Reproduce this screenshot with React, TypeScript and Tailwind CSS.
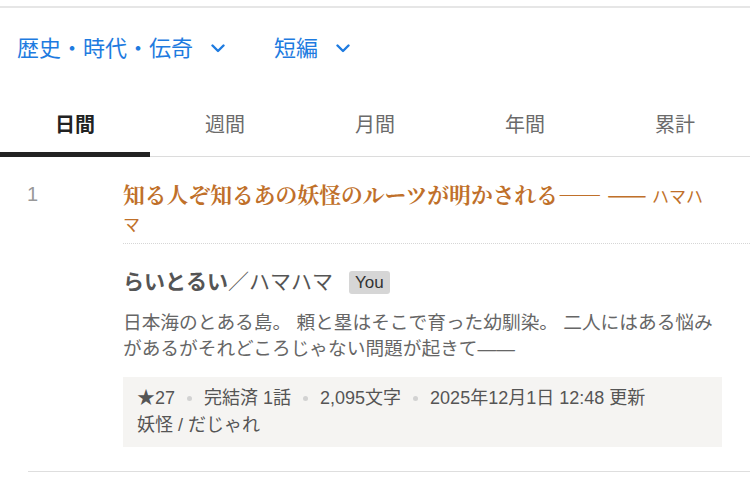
import React from "react";

const sans = { fontFamily: '"Liberation Sans", "Noto Sans CJK JP", sans-serif' };
const serif = { fontFamily: '"Noto Serif CJK JP", "Liberation Serif", "Noto Sans CJK JP", serif' };

function Chevron() {
  return (
    <svg width="14" height="9" viewBox="0 0 14 9" fill="none" className="shrink-0">
      <path d="M1.5 1.5 L7 7 L12.5 1.5" stroke="#1e7be0" strokeWidth="2.4" strokeLinecap="round" strokeLinejoin="round" />
    </svg>
  );
}

function Dot() {
  return <span className="mx-[12px] inline-block w-[5px] h-[5px] rounded-full bg-[#d2d2d2]" />;
}

const tabs = ["日間", "週間", "月間", "年間", "累計"];

export default function App() {
  return (
    <div className="w-[750px] h-[487px] bg-white overflow-hidden" style={sans}>
      <div className="h-[6px]" />
      <div className="h-[2px] bg-[#e6e6e6]" />
      <div className="h-[80px] flex items-center pl-[17px] text-[#1e7be0] text-[22px]">
        <div className="flex items-center gap-[18px]">
          <span>歴史・時代・伝奇</span>
          <Chevron />
        </div>
        <div className="flex items-center gap-[18px] ml-[49px]">
          <span>短編</span>
          <Chevron />
        </div>
      </div>
      <div className="flex">
        {tabs.map((t, i) => (
          <div key={t} className="flex-1 flex flex-col">
            <div
              className={
                "h-[64px] pt-[10px] flex items-center justify-center text-[20px] " +
                (i === 0 ? "font-bold text-[#222]" : "text-[#6b6b6b]")
              }
            >
              {t}
            </div>
            {i === 0 ? (
              <div className="h-[5px] bg-[#222]" />
            ) : (
              <div className="h-[5px] border-b border-[#dcdcdc]" />
            )}
          </div>
        ))}
      </div>
      <div className="flex pt-[23px]">
        <div className="w-[123px] shrink-0 pl-[27px] text-[20px] leading-[28px] text-[#999]">1</div>
        <div className="flex-1 min-w-0">
          <div className="w-[590px] h-[63px] pb-[7px] text-[21.8px] leading-[28px] font-bold text-[#c0702a]" style={serif}>
            知る人ぞ知るあの妖怪のルーツが明かされる―― <span className="font-black">——</span>{" "}
            <span className="font-normal text-[17px] leading-[17px]" style={sans}>ハマハマ</span>
          </div>
          <div className="border-t border-dotted border-[#d6d6d6]" />
          <div className="pt-[24px] flex items-center text-[21px] leading-[28px] text-[#555]">
            <span className="font-bold">らいとるい</span>
            <span>／ハマハマ</span>
            <span className="ml-[16px] bg-[#d6d6d6] rounded-[3px] px-[6px] text-[17px] leading-[23px] text-[#333]">You</span>
          </div>
          <div className="w-[599px] mt-[14px] text-[18.7px] leading-[26px] text-[#666]">
            日本海のとある島。 頼と塁はそこで育った幼馴染。 二人にはある悩みがあるがそれどころじゃない問題が起きて――
          </div>
          <div className="w-[599px] mt-[15px] bg-[#f5f4f2] px-[14px] py-[8px] text-[18px] leading-[27px] text-[#555]">
            <div className="flex items-center whitespace-nowrap">
              <span>★27</span>
              <Dot />
              <span>完結済 1話</span>
              <Dot />
              <span>2,095文字</span>
              <Dot />
              <span>2025年12月1日 12:48 更新</span>
            </div>
            <div>妖怪 / だじゃれ</div>
          </div>
        </div>
      </div>
      <div className="ml-[28px] mt-[24px] h-px bg-[#dedede]" />
    </div>
  );
}
